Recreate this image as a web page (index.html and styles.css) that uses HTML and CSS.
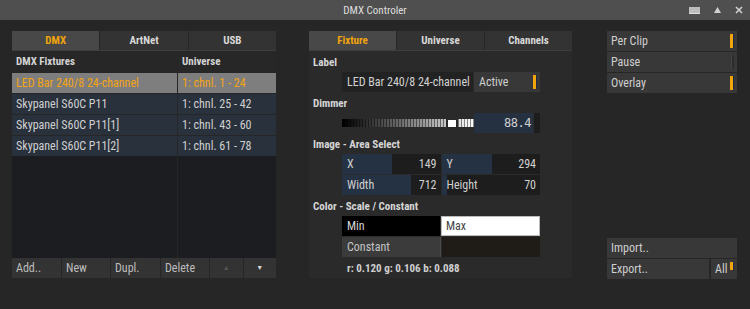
FILE: index.html
```html
<!DOCTYPE html>
<html lang="en">
<head>
  <meta charset="UTF-8">
  <title>DMX Controler</title>
  <link rel="stylesheet" href="styles.css">
</head>
<body>
  <div class="titlebar">
    <span class="title">DMX Controler</span>
    <div class="win-buttons">
      <svg width="11" height="7" viewBox="0 0 11 7"><rect x="0" y="0" width="11" height="7" fill="#bdbdbd"/><rect x="0" y="6" width="11" height="1" fill="#e0e0e0"/></svg>
      <svg width="7" height="6" viewBox="0 0 7 6"><polygon points="3.5,0 7,6 0,6" fill="#d0d0d0"/></svg>
      <svg width="8" height="8" viewBox="0 0 8 8"><path d="M1 1 L7 7 M7 1 L1 7" stroke="#d0d0d0" stroke-width="1.6"/></svg>
    </div>
  </div>

  <div class="main">
    <!-- fixtures list -->
    <section class="panel left">
      <div class="tabs">
        <div class="tab active">DMX</div>
        <div class="tab">ArtNet</div>
        <div class="tab">USB</div>
      </div>
      <div class="list">
        <div class="list-head">
          <div class="col-a">DMX Fixtures</div>
          <div class="col-b">Universe</div>
        </div>
        <div class="list-row selected">
          <div class="col-a">LED Bar 240/8 24-channel</div>
          <div class="col-b">1: chnl. 1 - 24</div>
        </div>
        <div class="list-row">
          <div class="col-a">Skypanel S60C P11</div>
          <div class="col-b">1: chnl. 25 - 42</div>
        </div>
        <div class="list-row">
          <div class="col-a">Skypanel S60C P11[1]</div>
          <div class="col-b">1: chnl. 43 - 60</div>
        </div>
        <div class="list-row">
          <div class="col-a">Skypanel S60C P11[2]</div>
          <div class="col-b">1: chnl. 61 - 78</div>
        </div>
        <div class="list-empty">
          <div class="col-a"></div>
          <div class="col-b"></div>
        </div>
      </div>
      <div class="list-buttons">
        <div class="btn w49">Add..</div>
        <div class="btn w48">New</div>
        <div class="btn w49">Dupl.</div>
        <div class="btn w48">Delete</div>
        <div class="btn arrow dim">&#9650;</div>
        <div class="btn arrow">&#9660;</div>
      </div>
    </section>

    <!-- fixture settings -->
    <section class="panel middle">
      <div class="tabs">
        <div class="tab active">Fixture</div>
        <div class="tab">Universe</div>
        <div class="tab">Channels</div>
      </div>
      <div class="settings">
        <div class="label">Label</div>
        <div class="row">
          <div class="field name">LED Bar 240/8 24-channel</div>
          <div class="field toggle">Active<span class="led on"></span></div>
        </div>

        <div class="label">Dimmer</div>
        <div class="row">
          <div class="slider">
            <div class="thumb"></div>
          </div>
          <div class="field value">88.4</div>
          <div class="field value-end"></div>
        </div>

        <div class="label">Image - Area Select</div>
        <div class="row">
          <div class="num" style="--fill: 50px">
            <span>X</span><span>149</span>
          </div>
          <div class="num" style="--fill: 50px">
            <span>Y</span><span>294</span>
          </div>
        </div>
        <div class="row">
          <div class="num" style="--fill: 69px">
            <span>Width</span><span>712</span>
          </div>
          <div class="num" style="--fill: 5px">
            <span>Height</span><span>70</span>
          </div>
        </div>

        <div class="label">Color - Scale / Constant</div>
        <div class="row">
          <div class="field swatch min">Min</div>
          <div class="field swatch max">Max</div>
        </div>
        <div class="row">
          <div class="field swatch constant">Constant</div>
          <div class="field swatch brown"></div>
        </div>
        <div class="rgb">r: 0.120 g: 0.106 b: 0.088</div>
      </div>
    </section>

    <!-- options -->
    <section class="right">
      <div class="options">
        <div class="opt">Per Clip<span class="led on"></span></div>
        <div class="opt">Pause<span class="led"></span></div>
        <div class="opt">Overlay<span class="led on"></span></div>
      </div>
      <div class="io">
        <div class="opt">Import..</div>
        <div class="io-row">
          <div class="opt export">Export..</div>
          <div class="opt all">All<span class="led on small"></span></div>
        </div>
      </div>
    </section>
  </div>
</body>
</html>
```

FILE: styles.css
```css
body {
  margin: 0;
  width: 750px;
  height: 309px;
  background: #262626;
  font-family: "Roboto Condensed", "Liberation Sans", sans-serif;
  font-size: 12px;
  color: #cfcfcf;
  overflow: hidden;
}

.titlebar {
  height: 20px;
  background: #4f4f4f;
  display: flex;
  align-items: center;
  justify-content: center;
  position: relative;
}

.title {
  font-size: 11px;
  color: #dedede;
}

.win-buttons {
  position: absolute;
  right: 7px;
  top: 6px;
  display: flex;
  align-items: center;
  gap: 14px;
}

.main {
  display: grid;
  grid-template-columns: 264px 263px 132px;
  column-gap: 33px;
  padding: 11px 0 0 12px;
}

.main .right {
  margin-left: 2px;
}

/* tabs */
.tabs {
  display: flex;
  gap: 1px;
  height: 19px;
  border-bottom: 1px solid #3e3e3e;
}

.tab {
  flex: 1;
  background: #333333;
  color: #d8d8d8;
  font-size: 11px;
  font-weight: bold;
  display: flex;
  align-items: center;
  justify-content: center;
}

.tab.active {
  background: #484848;
  color: #f0a40c;
}

/* fixture list */
.list {
  display: flex;
  flex-direction: column;
}

.list-head, .list-row, .list-empty {
  display: flex;
  gap: 1px;
}

.list-head {
  height: 21px;
  font-size: 11px;
  font-weight: bold;
  color: #d4d4d4;
}

.list-head > div {
  display: flex;
  align-items: center;
  padding-left: 4px;
  background: #272727;
}

.col-a {
  width: 165px;
  box-sizing: border-box;
}

.col-b {
  flex: 1;
}

.list-row {
  margin-top: 1px;
}

.list-row > div {
  height: 20px;
  display: flex;
  align-items: center;
  padding-left: 4px;
  background: #29313c;
  color: #d0d0d0;
  white-space: nowrap;
}

.list-row.selected > div {
  background: #7e7e7e;
  color: #f3a414;
}

.list-empty {
  height: 102px;
}

.list-empty > div {
  background: #1c1d20;
}

.list-buttons {
  display: flex;
  gap: 1px;
  height: 20px;
}

.btn {
  background: #333333;
  color: #bdbdbd;
  display: flex;
  align-items: center;
  padding-left: 4px;
}

.w49 { width: 45px; }
.w48 { width: 44px; }

.btn.arrow {
  flex: 1;
  padding-left: 0;
  justify-content: center;
  font-size: 7px;
  color: #d8d8d8;
}

.btn.arrow.dim {
  color: #555555;
}

/* fixture settings */
.middle .settings {
  background: #2a2a2a;
  padding: 1px 32px 0 33px;
  height: 226px;
}

.label {
  height: 20px;
  display: flex;
  align-items: center;
  margin-left: -29px;
  font-size: 11px;
  font-weight: bold;
  color: #d6d6d6;
}

.row {
  display: flex;
  gap: 1px;
  height: 20px;
  margin-bottom: 1px;
}

.field {
  display: flex;
  align-items: center;
  padding-left: 5px;
  white-space: nowrap;
}

.field.name {
  width: 126px;
  background: #222222;
  color: #d2d2d2;
}

.field.toggle {
  flex: 1;
  background: #383838;
  justify-content: space-between;
  padding-right: 3px;
}

.led {
  width: 2px;
  height: 14px;
  border-left: 1px solid #444;
  background: #2c2c2c;
}

.led.on {
  width: 3px;
  border-left: 0;
  background: #f2a60a;
  border-right: 1px solid #1e2a44;
}

.led.small {
  height: 8px;
  align-self: flex-start;
  margin-top: 3px;
}

.slider {
  width: 132px;
  align-self: center;
  height: 8px;
  position: relative;
  background:
    repeating-linear-gradient(90deg, transparent 0 2px, rgba(0, 0, 0, 0.45) 2px 3px),
    linear-gradient(90deg, #000000, #6e6e6e 45%, #ffffff);
}

.slider .thumb {
  position: absolute;
  left: 104px;
  top: -1px;
  width: 8px;
  height: 7px;
  background: #ffffff;
  border: 2px solid #2a2a2a;
}

.field.value {
  width: 59px;
  margin-left: -1px;
  box-sizing: border-box;
  background: #253141;
  justify-content: flex-end;
  padding-right: 2px;
  font-family: "DejaVu Sans Mono", monospace;
  font-size: 12px;
  color: #d0d0d0;
  letter-spacing: -0.5px;
}

.field.value-end {
  flex: 1;
  padding: 0;
  background: #1d1d1d;
}

.num {
  flex: 1;
  display: flex;
  justify-content: space-between;
  align-items: center;
  padding: 0 4px 0 5px;
  background: linear-gradient(90deg, #253244 var(--fill), #1d1d1d var(--fill));
  color: #d0d0d0;
}

.swatch {
  flex: 1;
  box-sizing: border-box;
}

.swatch.min {
  background: #000000;
  color: #d6d6d6;
}

.swatch.max {
  background: #ffffff;
  border: 1px solid #bbbbbb;
  color: #444444;
  padding-left: 4px;
}

.swatch.constant {
  background: #3b3b3b;
  color: #c4c4c4;
  border-right: 1px solid #4a4a4a;
  box-shadow: inset -3px 0 0 #3b3b3b;
}

.swatch.brown {
  background: #1f1c18;
}

.rgb {
  height: 20px;
  display: flex;
  align-items: center;
  padding-left: 5px;
  font-size: 11px;
  font-weight: bold;
  color: #cfcfcf;
}

/* options */
.right {
  display: flex;
  flex-direction: column;
  justify-content: space-between;
  height: 248px;
}

.options, .io {
  display: flex;
  flex-direction: column;
  gap: 1px;
}

.opt {
  height: 20px;
  background: #383838;
  color: #cfcfcf;
  display: flex;
  align-items: center;
  justify-content: space-between;
  padding: 0 3px 0 4px;
}

.io-row {
  display: flex;
  gap: 2px;
}

.opt.export {
  flex: 1;
}

.opt.all {
  width: 19px;
}
```
